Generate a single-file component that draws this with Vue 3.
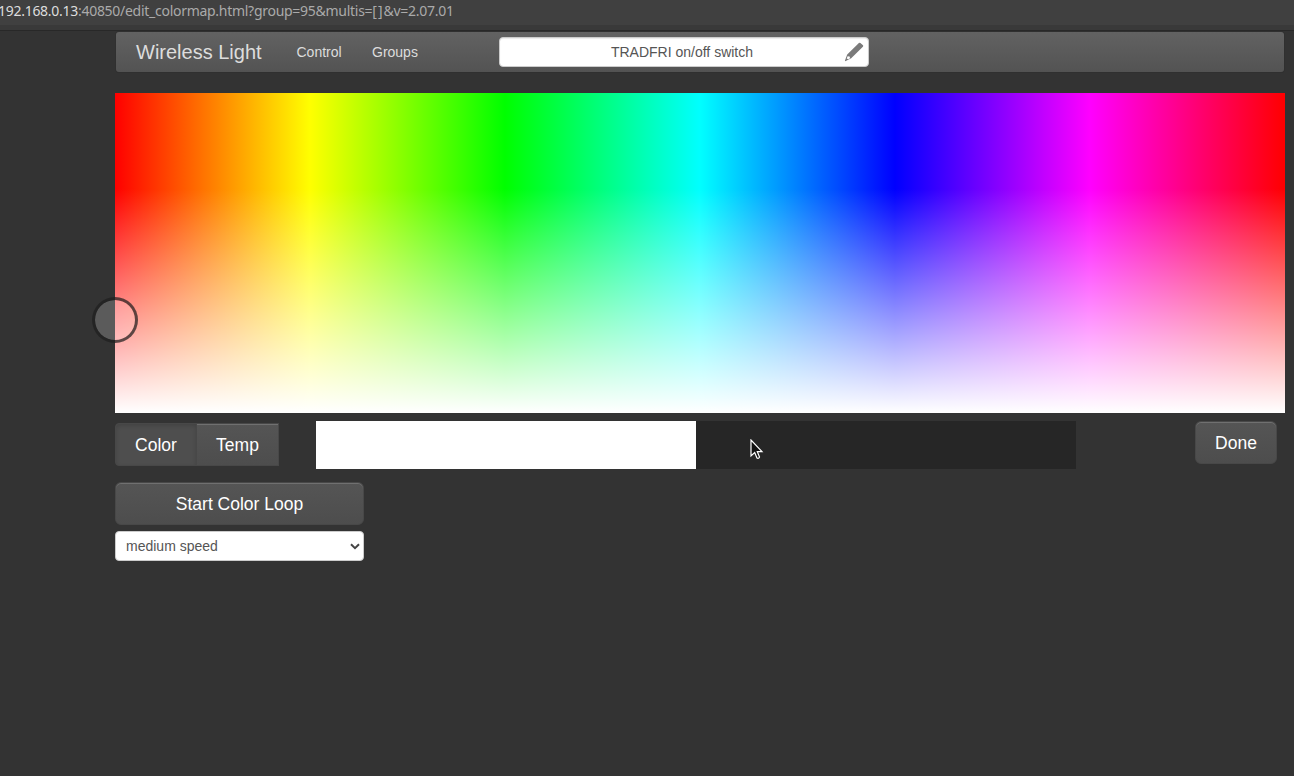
<script setup>
import { ref } from 'vue'

const mode = ref('Color')
const speed = ref('medium speed')
const brightness = ref(50)
</script>

<template>
  <div class="screen">
    <div class="address"><span class="url"><b>192.168.0.13</b>:40850/edit_colormap.html?group=95&amp;multis=<i>[]</i>&amp;v=2.07.01</span></div>
    <div class="edge"></div>
    <main class="page">
      <nav class="navbar">
        <a class="brand">Wireless Light</a>
        <a class="link control">Control</a>
        <a class="link groups">Groups</a>
        <div class="device">
          <span>TRADFRI on/off switch</span>
          <svg class="pencil" width="20" height="20" viewBox="0 0 20 20">
            <path d="M14.9 1.1Q15.7.3 16.4 1L19 3.3Q19.6 4 18.9 4.7L7.2 16.2L1.2 19.3L.9 18.8L3.2 12.5ZM3.6 14.2L2.8 16.5L4.1 17.3L6.1 16.2L5.6 14.6Z" fill="#7a7a7a" fill-rule="evenodd" />
          </svg>
        </div>
      </nav>
      <div class="colormap"><div class="picker"></div></div>
      <div class="controls">
        <div class="modes">
          <button v-for="m in ['Color', 'Temp']" :key="m" :class="['btn', 'mode', { active: mode === m }]" @click="mode = m">{{ m }}</button>
        </div>
        <div class="slider">
          <div class="level" :style="{ width: brightness + '%' }"></div>
          <svg class="pointer" width="14" height="21" viewBox="0 0 14 21">
            <path d="M1 1V17L4.7 13.6L7 19.1Q8.6 20 9.5 18L7.3 12.7H12Z" fill="#111" stroke="#fff" stroke-width="1.2" stroke-linejoin="miter" />
          </svg>
        </div>
        <button class="btn done">Done</button>
      </div>
      <button class="btn loop">Start Color Loop</button>
      <div class="select">
        <span>{{ speed }}</span>
        <svg width="10" height="7" viewBox="0 0 10 7"><path d="M1 1.2L5 5.1L9 1.2" fill="none" stroke="#444" stroke-width="2" /></svg>
      </div>
    </main>
  </div>
</template>

<style>
body { margin: 0; background: #333; }
</style>

<style scoped>
.screen {
  height: 776px;
  overflow: hidden;
  background: #333;
  font-family: "Liberation Sans", Arial, sans-serif;
  font-size: 14px;
  color: #555;
}
.address {
  height: 25px;
  background: #404040;
  color: #aaa;
  font: 14px/22px "Noto Sans", sans-serif;
  white-space: nowrap;
}
.url { display: inline-block; margin-left: -2px; letter-spacing: -0.28px; }
.url b { font-weight: 400; color: #ddd; }
.url i { font-style: normal; letter-spacing: 1px; }
.edge { height: 5px; background: #393939; border-bottom: 1px solid #282828; }
.page { width: 1170px; margin-left: 115px; padding-top: 1px; }
.navbar {
  box-sizing: border-box;
  display: flex;
  align-items: center;
  width: 1168px;
  height: 40px;
  margin-left: 1px;
  border-radius: 3px;
  background: linear-gradient(#626262, #535353);
  box-shadow: 0 0 0 1px #303030;
  color: #ddd;
}
.brand { width: 160.5px; padding-left: 20px; font-size: 20px; }
.link { width: 75.5px; box-sizing: border-box; }
.groups { width: 127px; }
.device {
  box-sizing: border-box;
  position: relative;
  width: 370px;
  height: 30px;
  border: 1px solid #ccc;
  border-radius: 4px;
  background: #fff;
  box-shadow: inset 0 1px 1px rgba(0, 0, 0, 0.08);
  color: #555;
  text-align: center;
  line-height: 28px;
}
.device span { position: relative; left: -2px; }
.pencil { position: absolute; right: 4px; top: 4px; }
.colormap {
  position: relative;
  height: 320px;
  margin-top: 21px;
  background:
    linear-gradient(rgba(255, 255, 255, 0) 30%, #fff),
    linear-gradient(90deg, #f00, #ff0 16.667%, #0f0 33.333%, #0ff 50%, #00f 66.667%, #f0f 83.333%, #f00);
}
.picker {
  box-sizing: border-box;
  position: absolute;
  left: -23px;
  top: 204px;
  width: 46px;
  height: 46px;
  border: 3px solid rgba(30, 30, 30, 0.72);
  border-radius: 50%;
  background: rgba(255, 255, 255, 0.2);
  background-clip: padding-box;
}
.controls { display: flex; align-items: flex-start; height: 69px; padding-top: 8px; box-sizing: border-box; }
.btn {
  box-sizing: border-box;
  height: 43px;
  padding: 0;
  border: 1px solid #484848;
  border-radius: 6px;
  background: linear-gradient(#555, #4d4d4d);
  box-shadow: inset 0 1px 0 #707070;
  color: #fff;
  font: 17.5px/20px "Liberation Sans", Arial, sans-serif;
  text-align: center;
}
.modes { display: flex; width: 201px; padding-top: 2px; }
.mode { width: 82px; border-radius: 0; }
.mode + .mode { width: 83px; margin-left: -1px; }
.mode.active {
  border-radius: 4px 0 0 4px;
  background: #4e4e4e;
  box-shadow: inset 0 2px 4px rgba(0, 0, 0, 0.15);
}
.slider { position: relative; width: 760px; height: 48px; background: #262626; }
.level { height: 100%; background: #fff; }
.pointer { position: absolute; left: 433.5px; top: 18px; }
.done { width: 82px; margin-left: 119px; }
.loop { display: block; width: 249px; }
.select {
  box-sizing: border-box;
  display: flex;
  align-items: center;
  justify-content: space-between;
  width: 249px;
  height: 30px;
  margin-top: 6px;
  padding: 0 3px 0 10px;
  border: 1px solid #ccc;
  border-radius: 4px;
  background: #fff;
}
</style>
